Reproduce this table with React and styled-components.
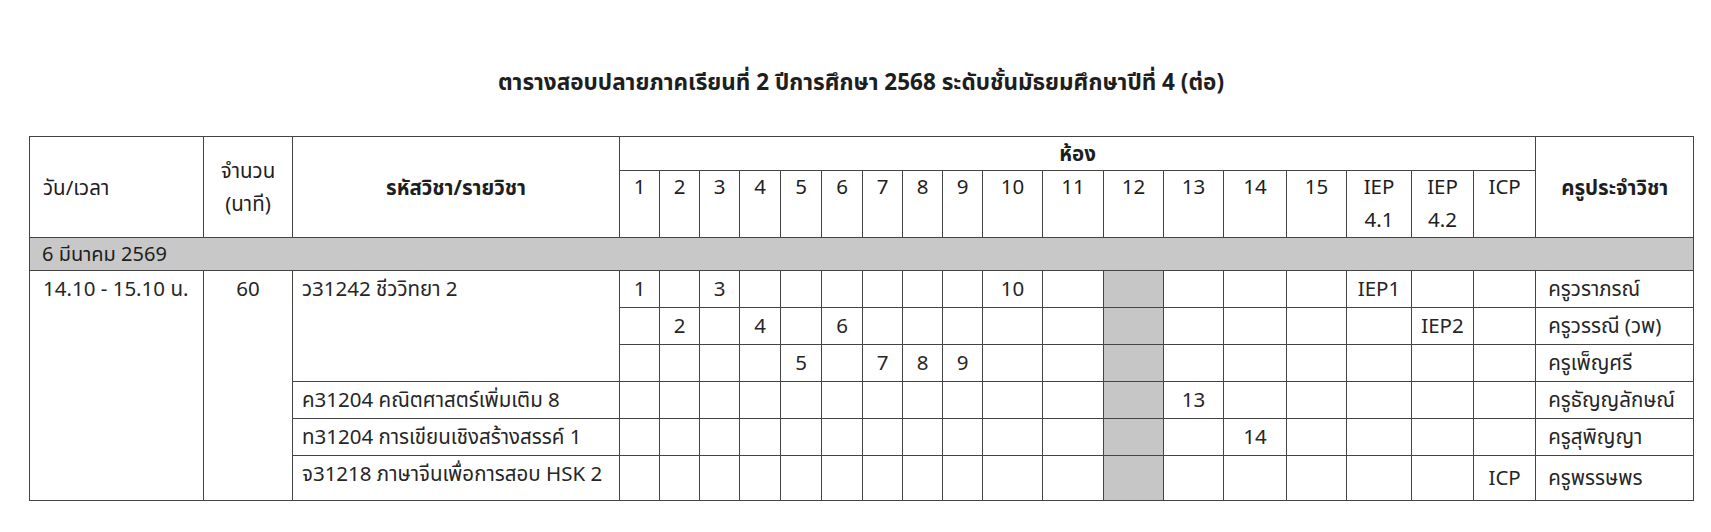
import React from 'react';
import styled, { createGlobalStyle } from 'styled-components';

const GlobalStyle = createGlobalStyle`
  body {
    margin: 0;
    background: #ffffff;
    font-family: "Tahoma", "Noto Sans Thai", "Noto Sans", "DejaVu Sans", sans-serif;
    color: #262626;
  }
`;

const Page = styled.div`
  width: 1711px;
  height: 532px;
  padding: 69px 18px 0 29px;
  box-sizing: border-box;
`;

const Title = styled.h1`
  margin: 0 0 39px;
  font-size: 22.5px;
  line-height: 28px;
  font-weight: 700;
  text-align: center;
  color: #1e1e1e;
`;

const Table = styled.table`
  width: 1664px;
  table-layout: fixed;
  border-collapse: collapse;
  font-size: 20.5px;
`;

const Col = styled.col`
  width: ${(p) => p.$w}px;
`;

const Th = styled.th`
  border: 1px solid #444;
  padding: ${(p) => (p.$top ? '0' : '2px')} ${(p) => (p.$left ? '13px' : '0')} 0;
  font-weight: ${(p) => (p.$bold ? 700 : 400)};
  font-size: 20.5px;
  text-align: ${(p) => (p.$left ? 'left' : 'center')};
  vertical-align: ${(p) => (p.$top ? 'top' : 'middle')};
  line-height: ${(p) => p.$lh || 33}px;
  white-space: pre-line;
  color: #1e1e1e;
`;

const HeadRow = styled.tr`
  height: ${(p) => p.$h}px;
`;

const DateRow = styled.tr`
  height: 33px;
  background: #c8c8c8;
`;

const DateCell = styled.td`
  border: 1px solid #444;
  padding: 1px 12px 0;
  font-size: 20px;
  font-weight: 400;
  color: #1e1e1e;
  line-height: 30px;
`;

const Row = styled.tr`
  height: ${(p) => p.$h}px;
`;

const Td = styled.td`
  border: 1px solid #444;
  padding: 2px ${(p) => p.$pad || 0}px 0;
  font-size: 20.5px;
  text-align: ${(p) => (p.$left ? 'left' : 'center')};
  vertical-align: ${(p) => (p.$top ? 'top' : 'middle')};
  line-height: 34px;
  background: ${(p) => (p.$shade ? '#c6c6c6' : 'transparent')};
  white-space: nowrap;
  color: #262626;
`;

const widths = [174, 89, 327, 40, 40, 40, 41, 41, 41, 40, 40, 40, 60, 61, 60, 60, 63, 60, 65, 62, 62, 158];

const rooms = ['1', '2', '3', '4', '5', '6', '7', '8', '9', '10', '11', '12', '13', '14', '15', 'IEP\n4.1', 'IEP\n4.2', 'ICP'];

const rows = [
  { subject: 'ว31242 ชีววิทยา 2', span: 3, cells: { 0: '1', 2: '3', 9: '10', 15: 'IEP1' }, teacher: 'ครูวราภรณ์' },
  { cells: { 1: '2', 3: '4', 5: '6', 16: 'IEP2' }, teacher: 'ครูวรรณี (วพ)' },
  { cells: { 4: '5', 6: '7', 7: '8', 8: '9' }, teacher: 'ครูเพ็ญศรี' },
  { subject: 'ค31204 คณิตศาสตร์เพิ่มเติม 8', span: 1, cells: { 12: '13' }, teacher: 'ครูธัญญลักษณ์' },
  { subject: 'ท31204 การเขียนเชิงสร้างสรรค์ 1', span: 1, cells: { 13: '14' }, teacher: 'ครูสุพิญญา' },
  { subject: 'จ31218 ภาษาจีนเพื่อการสอบ HSK 2', span: 1, cells: { 17: 'ICP' }, teacher: 'ครูพรรษพร', h: 45 },
];

const App = () => {
  return (
    <Page>
      <GlobalStyle />
      <Title>ตารางสอบปลายภาคเรียนที่ 2 ปีการศึกษา 2568 ระดับชั้นมัธยมศึกษาปีที่ 4 (ต่อ)</Title>
      <Table>
        <colgroup>
          {widths.map((w, i) => (
            <Col key={i} $w={w} />
          ))}
        </colgroup>
        <thead>
          <HeadRow $h={34}>
            <Th rowSpan={2} $left>วัน/เวลา</Th>
            <Th rowSpan={2}>{'จำนวน\n(นาที)'}</Th>
            <Th rowSpan={2} $bold>รหัสวิชา/รายวิชา</Th>
            <Th colSpan={18} $bold $lh={30}>ห้อง</Th>
            <Th rowSpan={2} $bold>ครูประจำวิชา</Th>
          </HeadRow>
          <HeadRow $h={67}>
            {rooms.map((r) => (
              <Th key={r} $top>{r}</Th>
            ))}
          </HeadRow>
        </thead>
        <tbody>
          <DateRow>
            <DateCell colSpan={22}>6 มีนาคม 2569</DateCell>
          </DateRow>
          {rows.map((row, i) => (
            <Row key={i} $h={row.h || 37}>
              {i === 0 && (
                <>
                  <Td rowSpan={6} $left $top $pad={13}>14.10 - 15.10 น.</Td>
                  <Td rowSpan={6} $top>60</Td>
                </>
              )}
              {row.subject && (
                <Td rowSpan={row.span} $left $top $pad={9}>{row.subject}</Td>
              )}
              {rooms.map((r, j) => (
                <Td key={r} $shade={j === 11}>{row.cells[j] || ''}</Td>
              ))}
              <Td $left $pad={12}>{row.teacher}</Td>
            </Row>
          ))}
        </tbody>
      </Table>
    </Page>
  );
};

export default App;
